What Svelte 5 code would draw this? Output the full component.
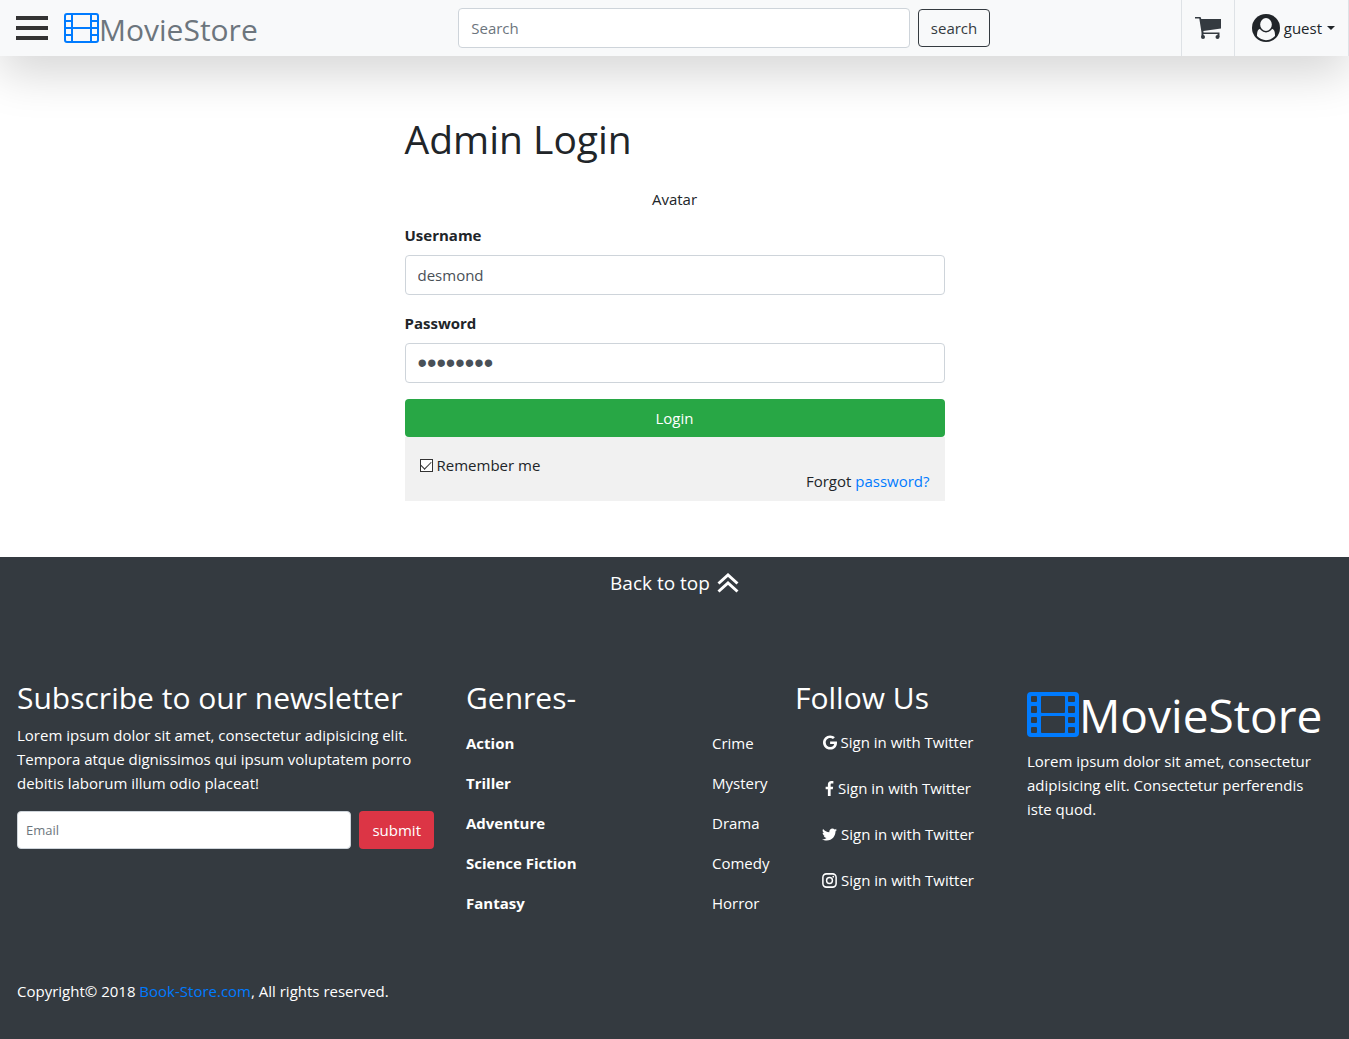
<script>
  const genres = [
    ['Action', 'Crime'],
    ['Triller', 'Mystery'],
    ['Adventure', 'Drama'],
    ['Science Fiction', 'Comedy'],
    ['Fantasy', 'Horror']
  ];
  const social = [
    { box: '0 0 488 512', width: 14, d: 'M488 261.8C488 403.3 391.1 504 248 504 110.8 504 0 393.2 0 256S110.8 8 248 8c66.8 0 123 24.5 166.3 64.9l-67.5 64.9C258.5 52.6 94.3 116.6 94.3 256c0 86.5 69.1 156.6 153.7 156.6 98.2 0 135-70.4 140.8-106.9H248v-85.3h236.1c2.3 12.7 3.9 24.9 3.9 41.4z' },
    { box: '0 0 264 512', width: 9, d: 'M215.8 85H264V3.6C255.7 2.5 227.1 0 193.8 0 124.3 0 76.7 42.4 76.7 120.3V192H0v91h76.7v229h94V283h73.6l11.7-91h-85.3v-62.7c0-26.3 7.3-44.3 45.1-44.3z' },
    { box: '0 0 512 512', width: 15, d: 'M459.37 151.716c.325 4.548.325 9.097.325 13.645 0 138.72-105.583 298.558-298.558 298.558-59.452 0-114.68-17.219-161.137-47.106 8.447.974 16.568 1.299 25.34 1.299 49.055 0 94.213-16.568 130.274-44.832-46.132-.975-84.792-31.188-98.112-72.772 6.498.974 12.995 1.624 19.818 1.624 9.421 0 18.843-1.3 27.614-3.573-48.081-9.747-84.143-51.98-84.143-102.985v-1.299c13.969 7.797 30.214 12.67 47.431 13.319-28.264-18.843-46.781-51.005-46.781-87.391 0-19.492 5.197-37.36 14.294-52.954 51.655 63.675 129.3 105.258 216.365 109.807-1.624-7.797-2.599-15.918-2.599-24.04 0-57.828 46.782-104.934 104.934-104.934 30.213 0 57.502 12.67 76.67 33.137 23.715-4.548 46.456-13.32 66.599-25.34-7.798 24.366-24.366 44.833-46.132 57.827 21.117-2.273 41.584-8.122 60.426-16.243-14.292 20.791-32.161 39.308-52.628 54.253z' },
    { box: '0 0 512 512', width: 15, ring: true }
  ];
  let remember = $state(true);
</script>

<header id="top">
  <div class="left">
    <button class="menu" aria-label="Open menu"><span></span><span></span><span></span></button>
    <a class="brand" href="#top">
      <svg class="film" viewBox="0 0 35 30" aria-hidden="true">
        <rect x="1" y="1" width="33" height="28" rx="2" fill="none" stroke="#007bff" stroke-width="2" />
        <path d="M8 1V29M27 1V29M1 8H8M1 15H34M1 22H8M27 8H34M27 22H34" fill="none" stroke="#007bff" stroke-width="2" />
      </svg>
      <span>MovieStore</span>
    </a>
  </div>
  <form class="search" role="search" onsubmit={(e) => e.preventDefault()}>
    <input class="field" type="search" placeholder="Search" aria-label="Search" />
    <button class="btn outline">search</button>
  </form>
  <nav>
    <a class="cart" href="#cart" aria-label="Cart">
      <svg viewBox="0 0 26 22" width="26" height="22" aria-hidden="true">
        <path fill="#343a40" d="M0 0H5.500L6.300 2H26V11.500L8.300 14L8.600 15.500H24.500V20H22.500V17H8.500V20H6.500V15.500L4.300 1.500H0Z" />
        <circle cx="8" cy="20" r="2" fill="#343a40" />
        <circle cx="22.500" cy="20" r="2" fill="#343a40" />
      </svg>
    </a>
    <button class="user">
      <svg viewBox="0 0 28 28" width="28" height="28" aria-hidden="true">
        <circle cx="14" cy="14" r="14" fill="#212529" />
        <path fill="#f8f9fa" d="M5 22C5 17 6 15 9 14.500H19C22 15 23 17 23 22C18 27.500 10 27.500 5 22Z" />
        <ellipse cx="14" cy="10.500" rx="6.600" ry="7.200" fill="#f8f9fa" stroke="#212529" stroke-width="1.500" />
      </svg>
      guest<span class="caret"></span>
    </button>
  </nav>
</header>

<main>
  <form class="login" onsubmit={(e) => e.preventDefault()}>
    <h1>Admin Login</h1>
    <p class="avatar">Avatar</p>
    <label for="username">Username</label>
    <input class="field" id="username" type="text" value="desmond" />
    <label for="password">Password</label>
    <input class="field" id="password" type="password" value="password" />
    <button class="btn green">Login</button>
    <div class="options">
      <label class="remember"><input type="checkbox" bind:checked={remember} />Remember me</label>
      <p>Forgot <a href="#forgot">password?</a></p>
    </div>
  </form>
</main>

<footer>
  <a class="to-top" href="#top">Back to top
    <svg viewBox="0 0 22 20" width="22" height="20" aria-hidden="true">
      <path d="M1.500 10.500L11 2L20.500 10.500M1.500 18.500L11 10L20.500 18.500" fill="none" stroke="#fff" stroke-width="3" />
    </svg>
  </a>
  <div class="columns">
    <section>
      <h2>Subscribe to our newsletter</h2>
      <p>Lorem ipsum dolor sit amet, consectetur adipisicing elit. Tempora atque dignissimos qui ipsum voluptatem porro debitis laborum illum odio placeat!</p>
      <form class="subscribe" onsubmit={(e) => e.preventDefault()}>
        <input class="field" type="email" placeholder="Email" aria-label="Email" />
        <button class="btn red">submit</button>
      </form>
    </section>
    <section class="genres">
      <h2>Genres-</h2>
      <table>
        <tbody>
          {#each genres as [first, second]}
            <tr><th scope="row">{first}</th><td>{second}</td></tr>
          {/each}
        </tbody>
      </table>
    </section>
    <section>
      <h2>Follow Us</h2>
      <ul>
        {#each social as item}
          <li>
            <a href="#follow">
              <svg viewBox={item.box} width={item.width} height="15" aria-hidden="true">
                {#if item.ring}
                  <rect x="30" y="30" width="452" height="452" rx="120" fill="none" stroke="#fff" stroke-width="52" />
                  <circle cx="256" cy="256" r="100" fill="none" stroke="#fff" stroke-width="50" />
                  <circle cx="385" cy="127" r="30" fill="#fff" />
                {:else}
                  <path d={item.d} fill="#fff" />
                {/if}
              </svg>Sign in with Twitter
            </a>
          </li>
        {/each}
      </ul>
    </section>
    <section class="about">
      <a class="brand large" href="#top">
        <svg class="film" viewBox="0 0 52 45" aria-hidden="true">
          <path fill="#007bff" fill-rule="evenodd" d="M4 0H48Q52 0 52 4V41Q52 45 48 45H4Q0 45 0 41V4Q0 0 4 0Z
            M5 4Q4 4 4 5V9Q4 10 5 10H9Q10 10 10 9V5Q10 4 9 4Z
            M5 14Q4 14 4 15V20Q4 21 5 21H9Q10 21 10 20V15Q10 14 9 14Z
            M5 25Q4 25 4 26V30Q4 31 5 31H9Q10 31 10 30V26Q10 25 9 25Z
            M5 35Q4 35 4 36V40Q4 41 5 41H9Q10 41 10 40V36Q10 35 9 35Z
            M42 4Q41 4 41 5V9Q41 10 42 10H47Q48 10 48 9V5Q48 4 47 4Z
            M42 14Q41 14 41 15V20Q41 21 42 21H47Q48 21 48 20V15Q48 14 47 14Z
            M42 25Q41 25 41 26V30Q41 31 42 31H47Q48 31 48 30V26Q48 25 47 25Z
            M42 35Q41 35 41 36V40Q41 41 42 41H47Q48 41 48 40V36Q48 35 47 35Z
            M15 4Q14 4 14 5V20Q14 21 15 21H37Q38 21 38 20V5Q38 4 37 4Z
            M15 24Q14 24 14 25V40Q14 41 15 41H37Q38 41 38 40V25Q38 24 37 24Z" />
        </svg>
        <span>MovieStore</span>
      </a>
      <p>Lorem ipsum dolor sit amet, consectetur adipisicing elit. Consectetur perferendis iste quod.</p>
    </section>
  </div>
  <p class="copyright">Copyright© 2018 <a href="#home">Book-Store.com</a>, All rights reserved.</p>
</footer>

<style>
  :global(body) {
    margin: 0;
    background: #fff;
  }
  :global(#app) {
    color: #212529;
    font: 15px/24px "Open Sans", "Noto Sans", sans-serif;
    min-height: 100vh;
    display: flex;
    flex-direction: column;
  }
  * { box-sizing: border-box; }
  h1, h2, p, ul { margin: 0; font-weight: 400; }
  a { color: #007bff; text-decoration: none; }
  button, input { font: inherit; color: inherit; }
  button { cursor: pointer; }

  header {
    display: flex;
    align-items: center;
    justify-content: space-between;
    gap: 8px;
    height: 56px;
    padding-left: 16px;
    background: #f8f9fa;
    box-shadow: 0 16px 48px rgba(0, 0, 0, 0.176);
  }
  .left { display: flex; align-items: center; gap: 16px; padding-right: 10px; }
  .menu {
    display: flex;
    flex-direction: column;
    gap: 6px;
    width: 32px;
    padding: 0;
    border: 0;
    background: none;
  }
  .menu span { height: 4px; background: #333; }
  .brand { display: flex; align-items: center; color: #6c757d; font-size: 30px; line-height: 40px; }
  .brand span { padding-top: 4px; }
  .film { width: 35px; height: 30px; flex: none; }

  .field {
    width: 100%;
    min-width: 0;
    height: 40px;
    padding: 6px 12px;
    border: 1px solid #ced4da;
    border-radius: 4px;
    background: #fff;
    color: #495057;
    outline: 0;
  }
  .field::placeholder { color: #6c757d; opacity: 1; }
  .btn {
    height: 38px;
    padding: 0 12px;
    border: 1px solid transparent;
    border-radius: 4px;
    color: #fff;
  }
  .search { display: flex; align-items: center; gap: 8px; flex: 0 1 532px; }
  .outline { border-color: #343a40; background: transparent; color: #343a40; }
  nav { display: flex; align-self: stretch; }
  .cart, .user {
    display: flex;
    align-items: center;
    justify-content: center;
    border: 0;
    border-left: 1px solid #dee2e6;
    background: none;
  }
  .cart { width: 53px; }
  .user { padding: 0 13px 0 17px; border-right: 1px solid #dee2e6; gap: 4px; }
  .caret { margin-left: 1px; border: 4px solid transparent; border-top-color: #212529; border-bottom: 0; }

  main { padding: 58px 16px 56px; }
  .login { display: flex; flex-direction: column; max-width: 540px; margin: 0 auto; }
  h1 { font-size: 39px; line-height: 49px; }
  .avatar { margin: 24px 0 12px; text-align: center; }
  .login label { margin-bottom: 8px; font-weight: 700; }
  .login .field { margin-bottom: 16px; }
  #password { font-family: "Liberation Sans", Arial, sans-serif; font-size: 27px; }
  .green { background: #28a745; }
  .options { padding: 16px 15px 8px; background: #f1f1f1; }
  .options .remember { display: flex; align-items: center; gap: 4px; height: 24px; margin: 0; font-weight: 400; }
  .options p { margin-top: -8px; text-align: right; }
  .remember input {
    appearance: none;
    display: grid;
    place-items: center;
    width: 13px;
    height: 13px;
    margin: 0;
    border: 1px solid #333;
    background: #fff;
  }
  .remember input:checked::before {
    content: "";
    width: 9px;
    height: 5px;
    border: solid #333;
    border-width: 0 0 1px 1px;
    transform: translateY(-1px) rotate(-45deg);
  }

  footer { flex: 1; background: #343a40; color: #fff; }
  .to-top {
    display: flex;
    align-items: center;
    justify-content: center;
    gap: 7px;
    height: 52px;
    color: #fff;
    font-size: 19px;
  }
  .columns {
    display: grid;
    grid-template-columns: 450fr 329fr 232fr 338fr;
    padding-top: 70px;
  }
  section { padding: 0 16px; min-width: 0; }
  section:first-child { padding-left: 17px; }
  .genres { padding-right: 8px; }
  .about { padding-right: 24px; }
  h2 { font-size: 30px; line-height: 38px; margin-bottom: 6px; white-space: nowrap; }
  .subscribe { display: flex; gap: 8px; margin-top: 16px; }
  .subscribe .field { height: 38px; padding: 4px 8px; font-size: 13px; }
  .red { background: #dc3545; }
  table { width: 100%; border-collapse: collapse; }
  th, td { height: 40px; padding: 0; text-align: left; }
  td { width: 59px; }
  ul { padding: 0 0 0 6px; list-style: none; }
  li { height: 46px; padding-top: 7px; }
  li a { display: flex; align-items: center; justify-content: center; gap: 4px; color: #fff; white-space: nowrap; }
  .large { margin: 7px 0; color: #fff; font-size: 46px; line-height: 54px; }
  .large span { padding-top: 2px; }
  .large .film { width: 52px; height: 45px; }
  .copyright { padding: 56px 16px 36px 17px; }
</style>
